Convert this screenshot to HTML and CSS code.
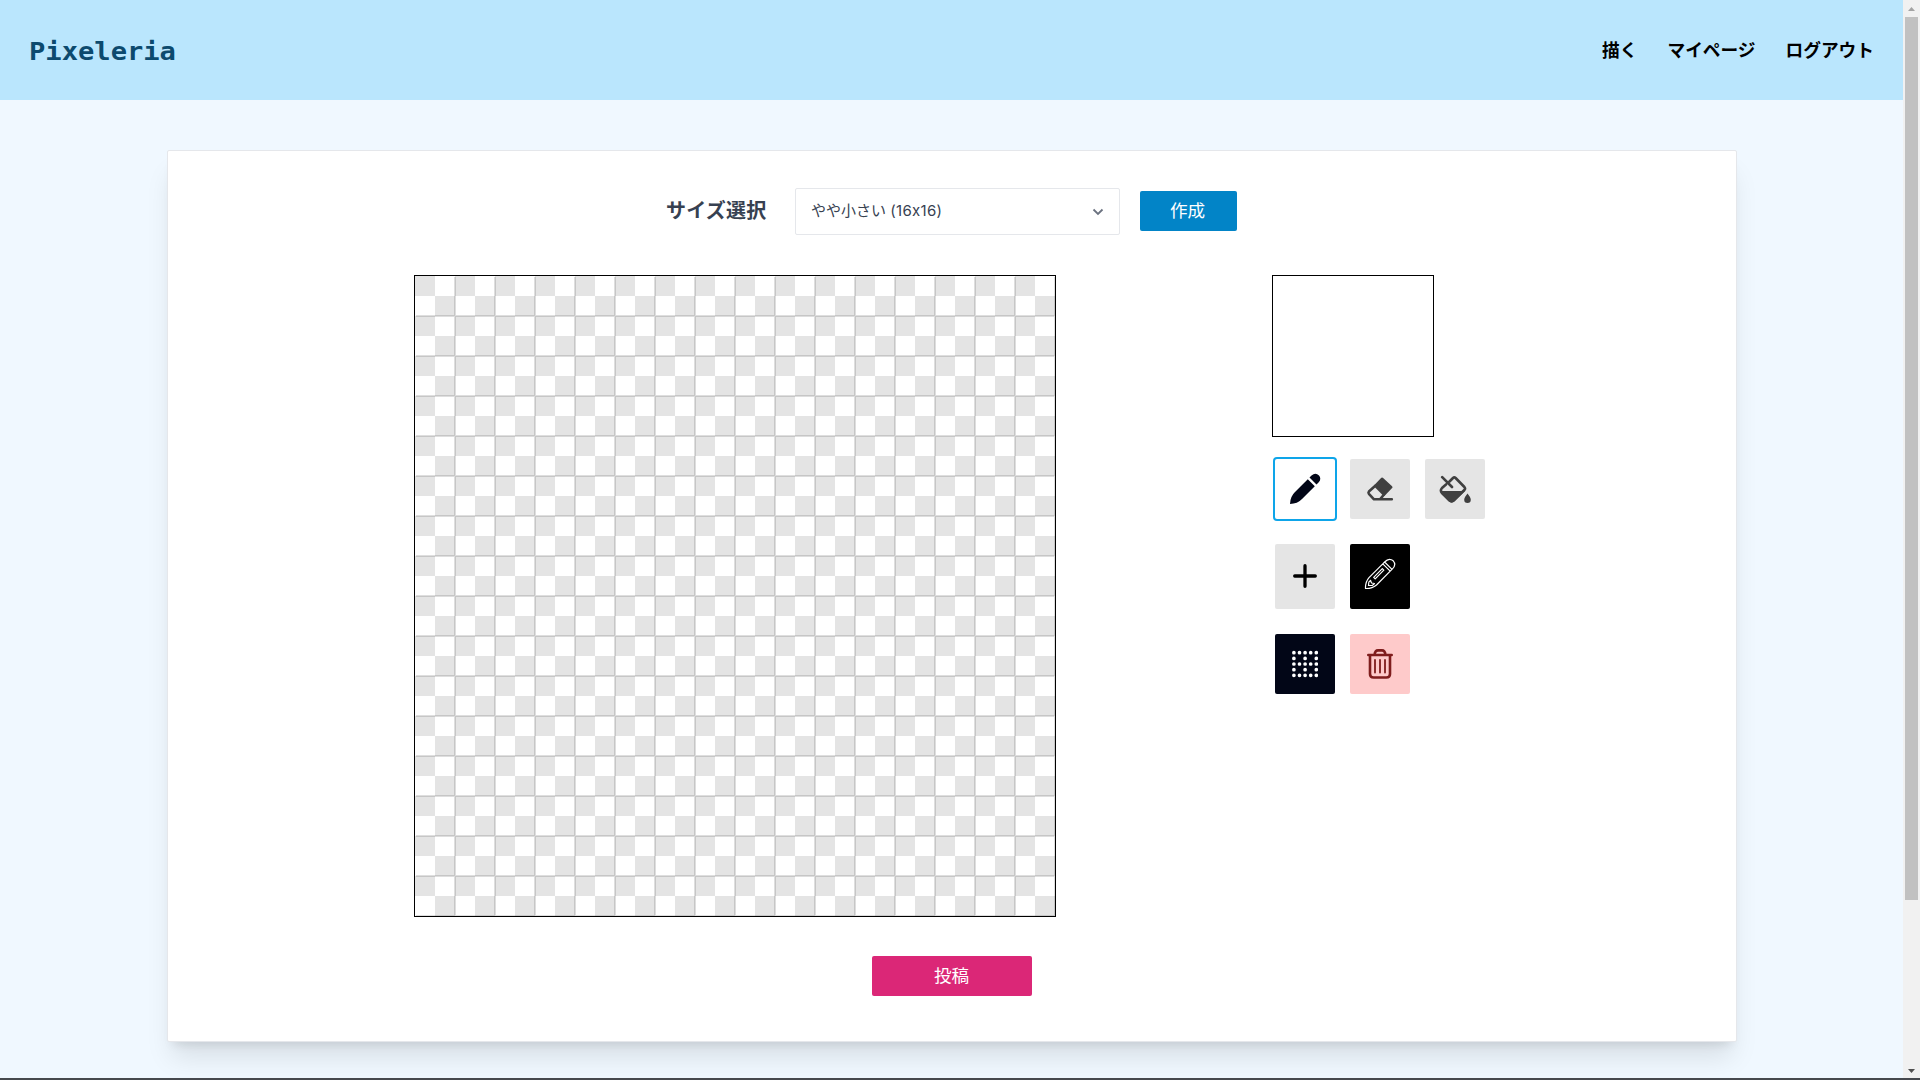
FILE: index.html
```html
<!DOCTYPE html>
<html lang="ja">
<head>
<meta charset="utf-8">
<title>Pixeleria</title>
<link rel="stylesheet" href="styles.css">
</head>
<body>
<div class="viewport">
  <div class="page">
    <header class="header">
      <a class="logo">Pixeleria</a>
      <nav class="nav"><a>描く</a><a>マイページ</a><a>ログアウト</a></nav>
    </header>
    <main class="card">
      <div class="size-row">
        <label class="size-label">サイズ選択</label>
        <div class="select"><span class="select-text">やや小さい <span class="latin">(16x16)</span></span>
          <svg class="chevron" viewBox="0 0 12 8"><path d="M1.500 1.500 6 6l4.500-4.500"/></svg>
        </div>
        <button class="btn create">作成</button>
      </div>
      <div class="workspace">
        <div class="canvas">
          <svg width="640" height="640" viewBox="0 0 640 640">
            <defs>
              <pattern id="checker" width="40" height="40" patternUnits="userSpaceOnUse">
                <path fill="#fff" d="M0 0h40v40H0z"/><path fill="#e4e4e4" d="M0 0h20v20H0zM20 20h20v20H20z"/>
              </pattern>
              <pattern id="lines" x="-1" y="-1" width="40" height="40" patternUnits="userSpaceOnUse">
                <path fill="#000" fill-opacity=".13" d="M0 0h40v2H2v38H0z"/>
              </pattern>
            </defs>
            <path fill="url(#checker)" d="M0 0h640v640H0z"/>
            <path fill="url(#lines)" d="M1 1h639v639H1z"/>
          </svg>
        </div>
        <aside class="side">
          <div class="preview"></div>
          <div class="tools">
            <button class="tool active">
              <svg width="32" height="32" viewBox="0 0 32 32" fill="#020617"><path d="M18.800 6.200 25.800 13.200 13 26Q8.500 30.800 1 31Q1.200 23.500 6 19ZM20.500 4.500 22.500 2.500Q26.500-.8 30 2.500Q32.800 6 29.500 9.500L27.500 11.500Z"/></svg>
            </button>
            <button class="tool">
              <svg width="28" height="26" viewBox="0 0 28 26" fill="none" stroke="#404040" stroke-width="2.600" stroke-linecap="round" stroke-linejoin="round"><path fill="#404040" d="M16 2.800 25.200 11.200 18 18.500 9.300 9.800Z"/><path d="M9.300 9.800 2.900 15.500Q2 16.600 2.900 17.800L8 23.300H14L18 18.500M14 23.300H25.800"/></svg>
            </button>
            <button class="tool">
              <svg width="32" height="28" viewBox="0 0 32 28" fill="none" stroke="#404040" stroke-width="2.600" stroke-linecap="round" stroke-linejoin="round"><path d="M3.200 2.200 13 12M10.500 6.500 14 3q1.300-1.200 2.600 0l8.800 9q1.300 1.500 0 3L14.600 25.300q-2 1.800-4 0L3 18q-2.200-2.400 0-5l4-3.500"/><path fill="#404040" stroke="none" d="M2 16H26L15.500 26.500q-2.900 2.300-5.800 0L2.500 19ZM28.500 18.500q-3.300 4-3.300 6.200a3.300 3.300 0 0 0 6.600 0q0-2.200-3.300-6.200z"/></svg>
            </button>
          </div>
          <div class="tools colors">
            <button class="tool tall plus"><svg width="24" height="24" viewBox="0 0 24 24"><path d="M12 1.700v20.600M1.700 12h20.600" stroke="#000" stroke-width="3.300" stroke-linecap="round"/></svg></button>
            <button class="tool tall black">
              <svg width="32" height="32" viewBox="0 0 32 32" fill="none" stroke="#fff" stroke-width="1.200" stroke-linejoin="round"><path d="M18.800 5.800 26.200 13.200 12.500 27Q8 30.800 1.500 30.500Q1.200 24 5 19.600ZM20.600 4Q25-.8 29.200 2.800Q32.800 7 28 11.400ZM18.800 5.800 20.600 4M26.200 13.200 28 11.400M18.300 10.700 9.700 19.300 11.200 20.800 19.800 12.200ZM4.500 27.500 4.800 24.200 6.500 22.300 7.500 25 10.500 25.500 8.500 27.300Z"/></svg>
            </button>
          </div>
          <div class="tools actions">
            <button class="tool navy"><svg width="26" height="28" viewBox="0 0 26 28"><path fill="none" stroke="#fff" stroke-width="3.700" stroke-linecap="round" d="M1.900 2.700h0m5.600 0h0m5.600 0h0m5.600 0h0m5.600 0h0M1.900 8.400h0m11.200 0h0m11.200 0h0M1.900 14h0m5.600 0h0m5.600 0h0m5.600 0h0m5.600 0h0M1.900 19.700h0m11.200 0h0m11.200 0h0M1.900 25.300h0m5.600 0h0m5.600 0h0m5.600 0h0m5.600 0h0"/></svg></button>
            <button class="tool red"><svg width="26" height="30" viewBox="0 0 26 30" fill="none" stroke="#7f1d1d" stroke-linecap="round"><path stroke-width="2.600" d="M1.300 6h23.400M7.500 6Q8 1.400 11 1.400H15Q18 1.400 18.500 6M3 6V25q0 3.500 3.600 3.500H19.400Q23 28.500 23 25V6"/><path stroke-width="1.800" d="M8 11V23.500M13 11V23.500M18 11V23.500"/></svg></button>
          </div>
        </aside>
      </div>
      <button class="btn post">投稿</button>
    </main>
  </div>
  <div class="scrollbar">
    <svg class="arrow" width="17" height="17"><path fill="#a3a3a3" d="M5 11h7L8.500 7z"/></svg>
    <div class="thumb"></div>
    <svg class="arrow bottom" width="17" height="17"><path fill="#505050" d="M5 8h7L8.500 12z"/></svg>
  </div>
</div>
<div class="taskbar"></div>
</body>
</html>
```
FILE: styles.css
```css
* { box-sizing: border-box; }
body { margin: 0; height: 1080px; overflow: hidden; display: flex; flex-direction: column; font-family: Inter, "Noto Sans CJK JP", sans-serif; }
button { border: 0; padding: 0; font: inherit; }
svg { display: block; }
.viewport { display: flex; height: 1078px; overflow: hidden; }
.page { width: 1903px; background: #f0f8ff; }
.header { height: 100px; display: flex; justify-content: space-between; align-items: center; padding: 0 29px; background: #bae6fd; }
.logo { padding-top: 3px; font: bold 24px/30px "DejaVu Sans Mono", monospace; color: #0c4a6e; transform: scaleX(1.13); transform-origin: left; }
.nav { display: flex; gap: 30px; padding-top: 1px; font-size: 17.700px; font-weight: 700; line-height: 28px; color: #000; }
.card { width: 1570px; height: 892px; margin: 50px auto 0; padding-top: 37px; display: flex; flex-direction: column; align-items: center; background: #fff; border: 1px solid #e5e7eb; border-radius: 2px; box-shadow: 0 20px 25px -5px rgb(0 0 0 / .1), 0 8px 10px -6px rgb(0 0 0 / .1); }
.size-row { height: 47px; display: flex; align-items: center; }
.size-label { width: 129px; padding-bottom: 4px; font-size: 20px; letter-spacing: .2px; font-weight: 700; color: #374151; }
.select { width: 325px; height: 47px; padding: 0 15px; display: flex; align-items: center; justify-content: space-between; border: 1px solid #e5e7eb; border-radius: 2px; font-size: 15px; color: #374151; }
.select-text { padding-bottom: 4px; }
.latin { letter-spacing: .3px; }
.chevron { width: 12px; height: 8px; fill: none; stroke: #6b7280; stroke-width: 1.800; }
.btn { height: 40px; padding-bottom: 3px; border-radius: 2px; color: #fff; font-size: 17.600px; }
.create { width: 97px; margin: 0 0 1px 20px; padding-right: 2px; background: #0284c7; }
.workspace { display: flex; width: 1076px; margin-top: 40px; justify-content: space-between; }
.canvas { width: 642px; height: 642px; border: 1px solid #000; }
.side { width: 218px; }
.preview { width: 162px; height: 162px; border: 1px solid #000; }
.tools { display: flex; align-items: center; gap: 15px; margin: 22px 0 0 3px; }
.colors { margin-top: 25px; }
.actions { margin-top: 25px; }
.tool { width: 60px; height: 60px; border-radius: 2px; display: flex; align-items: center; justify-content: center; background: #e5e5e5; }
.tall { height: 65px; }
.plus { padding-bottom: 1px; }
.active { background: #fff; border-radius: 2px; box-shadow: 0 0 0 2px #0ea5e9; }
.black { padding-bottom: 5px; background: #000; }
.navy { background: #020617; }
.red { background: #fecaca; }
.post { width: 160px; margin-top: 39px; background: #db2777; }
.scrollbar { width: 17px; display: flex; flex-direction: column; align-items: center; background: #f1f1f1; }
.thumb { width: 13px; height: 883px; background: #c1c1c1; }
.bottom { margin-top: auto; }
.taskbar { height: 2px; background: #46494e; }
```
